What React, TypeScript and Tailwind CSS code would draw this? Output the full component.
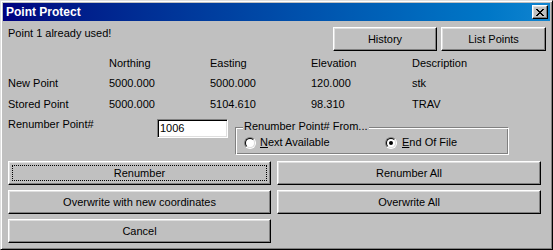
import React from "react";

const bevel =
  "bg-[#c0c0c0] border border-t-white border-l-white border-r-black border-b-black shadow-[inset_-1px_-1px_#808080,inset_1px_1px_#dfdfdf]";

function Btn({
  children,
  className = "",
  focused,
}: {
  children: React.ReactNode;
  className?: string;
  focused?: boolean;
}) {
  return (
    <button
      className={`relative flex items-center justify-center text-[11px] leading-[13px] text-black ${bevel} ${className}`}
    >
      {focused && <span className="absolute left-[3px] right-[3px] top-[3px] bottom-[3px] border border-dotted border-black" />}
      {children}
    </button>
  );
}

function Radio({ checked }: { checked?: boolean }) {
  return (
    <span className="w-[12px] h-[12px] rounded-full border border-t-[#808080] border-l-[#808080] border-r-white border-b-white flex">
      <span className="flex-1 rounded-full border border-t-black border-l-black border-r-[#dfdfdf] border-b-[#dfdfdf] bg-white flex items-center justify-center">
        {checked && <span className="w-[4px] h-[4px] rounded-full bg-black" />}
      </span>
    </span>
  );
}

export default function App() {
  const rows = [
    ["", "Northing", "Easting", "Elevation", "Description"],
    ["New Point", "5000.000", "5000.000", "120.000", "stk"],
    ["Stored Point", "5000.000", "5104.610", "98.310", "TRAV"],
  ];

  return (
    <div className="w-[553px] h-[250px] bg-[#c0c0c0] border border-t-[#dfdfdf] border-l-[#dfdfdf] border-r-black border-b-black shadow-[inset_1px_1px_#fff,inset_-1px_-1px_#808080] p-[2px] font-['Liberation_Sans',Arial,sans-serif] text-[11px] leading-[13px] text-black overflow-hidden">
      {/* title bar */}
      <div className="h-[18px] flex items-center bg-linear-to-r from-[#000080] to-[#1084d0] pl-[3px] pr-[2px]">
        <span className="text-white font-bold text-[12px]">Point Protect</span>
        <button className={`ml-auto w-[16px] h-[14px] flex items-center justify-center ${bevel}`}>
          <svg width="8" height="7" viewBox="0 0 8 7" shapeRendering="crispEdges">
            <path d="M0 0h2v1h1v1h2V1h1V0h2v1H7v1H6v1H5v1h1v1h1v1h1v1H6V6H5V5H3v1H2v1H0V6h1V5h1V4h1V3H2V2H1V1H0z" fill="#000" />
          </svg>
        </button>
      </div>

      <div className="pl-[5px] pr-[4px]">
        {/* message + top buttons */}
        <div className="mt-[6px] h-[24px] flex items-start">
          <span>Point 1 already used!</span>
          <Btn className="ml-auto w-[104px] h-[24px]">History</Btn>
          <Btn className="ml-[4px] w-[105px] h-[24px]">List Points</Btn>
        </div>

        {/* point table */}
        <div className="mt-[6px] grid grid-cols-[101px_101px_101px_101px_1fr] grid-rows-[20px_21px_20px]">
          {rows.flat().map((cell, i) => (
            <span key={i}>{cell}</span>
          ))}
        </div>

        {/* renumber */}
        <div className="h-[38px] flex items-start">
          <span className="w-[149px]">Renumber Point#</span>
          <div className="mt-[1px] w-[71px] h-[19px] bg-white border border-t-[#808080] border-l-[#808080] border-r-white border-b-white shadow-[inset_1px_1px_#000,inset_-1px_-1px_#dfdfdf] pl-[2px] pt-[2px]">
            1006
          </div>
          <div className="relative ml-[7px] mt-[9px] w-[274px] h-[28px] border border-t-[#808080] border-l-[#808080] border-r-white border-b-white shadow-[inset_1px_1px_#fff,inset_-1px_-1px_#808080] pl-[8px] pt-[8px]">
            <span className="absolute left-[7px] top-[-8px] px-[1px] bg-[#c0c0c0]">Renumber Point# From...</span>
            <div className="flex items-center">
              <div className="w-[141px] flex items-center gap-[4px]">
                <Radio />
                <span>
                  <u>N</u>ext Available
                </span>
              </div>
              <div className="flex items-center gap-[5px]">
                <Radio checked />
                <span>
                  <u>E</u>nd Of File
                </span>
              </div>
            </div>
          </div>
        </div>

        {/* action buttons */}
        <div className="mt-[5px] grid grid-cols-[263px_264px] gap-x-[6px] gap-y-[5px]">
          <Btn className="h-[24px]" focused>
            Renumber
          </Btn>
          <Btn className="h-[24px]">Renumber All</Btn>
          <Btn className="h-[24px]">Overwrite with new coordinates</Btn>
          <Btn className="h-[24px]">Overwrite All</Btn>
          <Btn className="h-[24px]">Cancel</Btn>
        </div>
      </div>
    </div>
  );
}
